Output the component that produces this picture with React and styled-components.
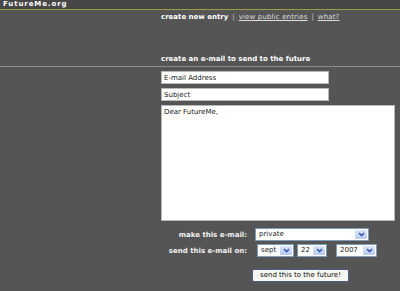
import styled, { createGlobalStyle } from 'styled-components';

const Global = createGlobalStyle`
  html, body {
    margin: 0;
    background: #555555;
  }
  body {
    font-family: "DejaVu Sans", Verdana, sans-serif;
    font-size: 7px;
    color: #ffffff;
  }
`;

const Header = styled.header`
  height: 9px;
  background: #474747;
  border-bottom: 1px solid #9c9c45;
  padding-left: 3px;
  font-weight: bold;
  font-size: 7px;
  letter-spacing: 0.9px;
  line-height: 9px;
`;

const Nav = styled.nav`
  padding: 2px 0 0 161px;
  line-height: 10px;
  height: 42px;
  color: #e8e8e8;
`;

const NavCurrent = styled.span`
  font-weight: bold;
  color: #ffffff;
`;

const Sep = styled.span`
  margin: 0 4px;
  color: #cccccc;
`;

const NavLink = styled.a`
  color: #dddddd;
  text-decoration: underline;
  letter-spacing: 0.15px;
`;

const Heading = styled.h2`
  margin: 0;
  padding: 0 0 2px 161px;
  border-bottom: 1px solid #8c8c8c;
  font-size: 7px;
  font-weight: bold;
  line-height: 10px;
`;

const Form = styled.form`
  display: flex;
  flex-direction: column;
  padding: 4px 0 0 161px;
`;

const TextInput = styled.input`
  box-sizing: border-box;
  width: 168px;
  height: 13px;
  margin: 0 0 4px;
  padding: 0 2px;
  border: 1px solid #b8b8b8;
  background: #ffffff;
  font: 7px "DejaVu Sans", Verdana, sans-serif;
  color: #222;
  outline: none;
`;

const Body = styled.textarea`
  box-sizing: border-box;
  width: 234px;
  height: 116px;
  margin: 0;
  padding: 2px;
  border: 1px solid #b8b8b8;
  background: #ffffff;
  font: 7px "DejaVu Sans", Verdana, sans-serif;
  color: #222;
  resize: none;
  outline: none;
`;

const Options = styled.div`
  display: grid;
  grid-template-columns: 86px auto;
  column-gap: 8px;
  row-gap: 3px;
  margin-top: 7px;
  align-items: center;
`;

const Label = styled.label`
  text-align: right;
  font-weight: bold;
  color: #f2f2f2;
`;

const Controls = styled.div`
  display: flex;
  gap: 3px;
  padding-left: ${p => p.inset || 0}px;
`;

const SelectBox = styled.div`
  position: relative;
  box-sizing: border-box;
  width: ${p => p.w}px;
  height: 13px;
  margin-left: ${p => p.offset || 0}px;
  border: 1px solid #7f9db9;
  background: #ffffff;
  color: #222;
  line-height: 11px;
  padding-left: 3px;
`;

const Arrow = styled.span`
  position: absolute;
  top: 1px;
  right: 1px;
  width: 12px;
  height: 9px;
  border-radius: 1px;
  background: linear-gradient(#dce6fa, #b7c9f0);
  display: flex;
  align-items: center;
  justify-content: center;
`;

const Select = ({ w, offset, children }) => (
  <SelectBox w={w} offset={offset}>
    {children}
    <Arrow>
      <svg width="7" height="5" viewBox="0 0 7 5">
        <path d="M1 1 L3.5 3.5 L6 1" stroke="#3b5ca8" strokeWidth="1.6" fill="none" />
      </svg>
    </Arrow>
  </SelectBox>
);

const Submit = styled.button`
  margin: 12px 0 0 91px;
  align-self: flex-start;
  width: 97px;
  height: 13px;
  padding: 0;
  border: 1px solid #4c5f88;
  border-radius: 2px;
  background: #f6f6f2;
  color: #111;
  font: 7px "DejaVu Sans", Verdana, sans-serif;
  line-height: 11px;
`;

export default function App() {
  return (
    <>
      <Global />
      <Header>FutureMe.org</Header>
      <Nav>
        <NavCurrent>create new entry</NavCurrent>
        <Sep>|</Sep>
        <NavLink href="#">view public entries</NavLink>
        <Sep>|</Sep>
        <NavLink href="#">what?</NavLink>
      </Nav>
      <Heading>create an e-mail to send to the future</Heading>
      <Form onSubmit={e => e.preventDefault()}>
        <TextInput defaultValue="E-mail Address" />
        <TextInput defaultValue="Subject" />
        <Body defaultValue="Dear FutureMe," />
        <Options>
          <Label>make this e-mail:</Label>
          <Controls>
            <Select w={114}>private</Select>
          </Controls>
          <Label>send this e-mail on:</Label>
          <Controls inset={2}>
            <Select w={37}>sept</Select>
            <Select w={30}>22</Select>
            <Select w={41} offset={6}>2007</Select>
          </Controls>
        </Options>
        <Submit type="submit">send this to the future!</Submit>
      </Form>
    </>
  );
}
